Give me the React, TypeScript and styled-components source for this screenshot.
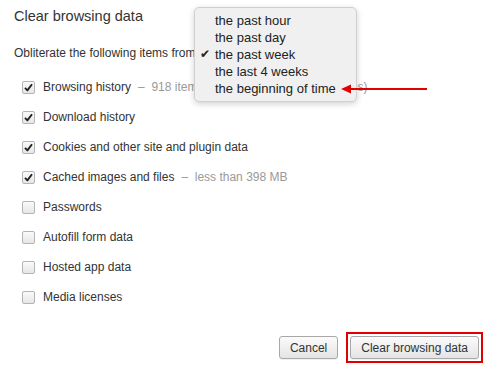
import styled, { createGlobalStyle } from 'styled-components';

const GlobalStyle = createGlobalStyle`
  html, body {
    margin: 0;
    padding: 0;
    background: #fff;
  }
  body {
    font-family: 'Liberation Sans', Arial, sans-serif;
    color: #333;
    -webkit-font-smoothing: antialiased;
  }
`;

const Dialog = styled.div`
  position: relative;
  width: 494px;
  height: 369px;
  box-sizing: border-box;
  padding: 6px 11px 0 14px;
  display: flex;
  flex-direction: column;
`;

const Title = styled.h1`
  margin: 0;
  font-size: 14.5px;
  font-weight: normal;
  line-height: 20px;
  color: #333;
`;

const Intro = styled.div`
  margin-top: 18px;
  font-size: 12px;
  line-height: 18px;
`;

const List = styled.ul`
  list-style: none;
  margin: 10px 0 0;
  padding: 0 0 0 8px;
`;

const Row = styled.li`
  height: 30px;
  display: flex;
  align-items: center;
  font-size: 12px;
  white-space: nowrap;
`;

const Box = styled.span<{ checked: boolean }>`
  width: 13px;
  height: 13px;
  box-sizing: border-box;
  border: 1px solid #b4b4b4;
  border-radius: 2px;
  background: linear-gradient(#fafafa, #e6e6e6);
  margin-right: 8px;
  display: flex;
  align-items: center;
  justify-content: center;
  flex-shrink: 0;
`;

const Hint = styled.span`
  color: #999;
  margin-left: 7px;
`;

const Footer = styled.div`
  margin-top: 20px;
  display: flex;
  justify-content: flex-end;
  align-items: center;
  gap: 8px;
`;

const Button = styled.button`
  height: 23px;
  padding: 0 10px;
  border: 1px solid #a8a8a8;
  border-radius: 3px;
  background: linear-gradient(#fbfbfb, #e4e4e4);
  font-family: 'Liberation Sans', Arial, sans-serif;
  font-size: 12px;
  color: #333;
  box-shadow: 0 1px 0 rgba(0, 0, 0, 0.06);
`;

const Highlight = styled.div`
  border: 2px solid #e00000;
  padding: 2px;
  display: flex;
`;

const Menu = styled.div`
  position: absolute;
  left: 194px;
  top: 7px;
  width: 163px;
  box-sizing: border-box;
  padding: 4px 0 4px;
  background: #f0f0f0;
  border: 1px solid #cfcfcf;
  border-radius: 5px;
  box-shadow: 0 2px 6px rgba(0, 0, 0, 0.18);
`;

const MenuItem = styled.div`
  position: relative;
  padding-left: 20px;
  font-size: 13px;
  line-height: 17px;
  color: #222;
  white-space: nowrap;
`;

const Tick = styled.span`
  position: absolute;
  left: 5px;
  top: 0;
  font-size: 12px;
`;

const Arrow = styled.svg`
  position: absolute;
  left: 340px;
  top: 83px;
`;

const items = [
  { label: 'Browsing history', hint: '918 items (and more on synced devices)', checked: true },
  { label: 'Download history', checked: true },
  { label: 'Cookies and other site and plugin data', checked: true },
  { label: 'Cached images and files', hint: 'less than 398 MB', checked: true },
  { label: 'Passwords', checked: false },
  { label: 'Autofill form data', checked: false },
  { label: 'Hosted app data', checked: false },
  { label: 'Media licenses', checked: false },
];

const periods = ['the past hour', 'the past day', 'the past week', 'the last 4 weeks', 'the beginning of time'];

function Check() {
  return (
    <svg width="9" height="9" viewBox="0 0 9 9">
      <path d="M1 4.8 L3.4 7.4 L8 1.2" fill="none" stroke="#222" strokeWidth="1.9" strokeLinejoin="round" />
    </svg>
  );
}

export default function App() {
  return (
    <>
      <GlobalStyle />
      <Dialog>
        <Title>Clear browsing data</Title>
        <Intro>Obliterate the following items from</Intro>
        <List>
          {items.map((item) => (
            <Row key={item.label}>
              <Box checked={item.checked}>{item.checked && <Check />}</Box>
              {item.label}
              {item.hint && <Hint>–&nbsp; {item.hint}</Hint>}
            </Row>
          ))}
        </List>
        <Footer>
          <Button>Cancel</Button>
          <Highlight>
            <Button>Clear browsing data</Button>
          </Highlight>
        </Footer>

        <Menu>
          {periods.map((p, i) => (
            <MenuItem key={p}>
              {i === 2 && <Tick>✔</Tick>}
              {p}
            </MenuItem>
          ))}
        </Menu>

        <Arrow width="90" height="12" viewBox="0 0 90 12">
          <line x1="8" y1="6" x2="87" y2="6" stroke="#e00000" strokeWidth="2" />
          <path d="M1 6 L11 1.5 L11 10.5 Z" fill="#e00000" />
        </Arrow>
      </Dialog>
    </>
  );
}
